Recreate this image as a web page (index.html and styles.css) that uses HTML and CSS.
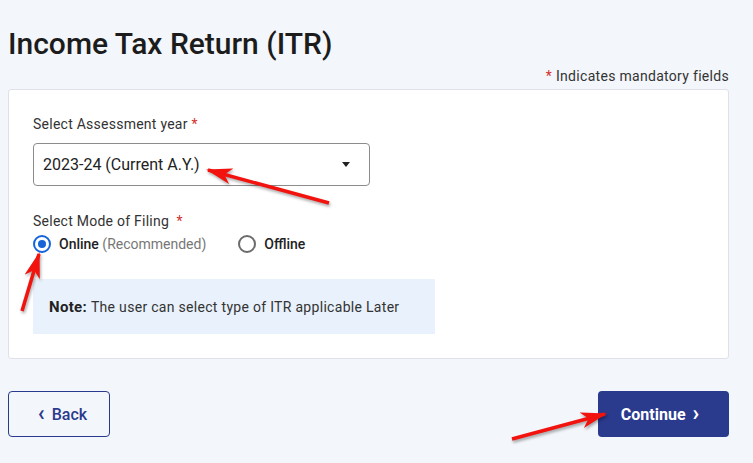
FILE: index.html
```html
<!DOCTYPE html>
<html lang="en">
<head>
  <meta charset="UTF-8">
  <meta name="viewport" content="width=device-width, initial-scale=1.0">
  <title>Income Tax Return (ITR)</title>
  <link rel="stylesheet" href="styles.css">
</head>
<body>

<main class="page">
  <h1 class="page-title">Income Tax Return (ITR)</h1>
  <p class="mandatory"><span class="req">*</span> Indicates mandatory fields</p>

  <section class="card">
    <div class="field">
      <label class="field-label">Select Assessment year <span class="req">*</span></label>
      <div class="select">
        <span class="select-value">2023-24 (Current A.Y.)</span>
        <span class="caret"></span>
      </div>
    </div>

    <div class="field mode">
      <label class="field-label">Select Mode of Filing&nbsp; <span class="req">*</span></label>
      <div class="radio-row">
        <span class="radio checked"><span class="dot"></span></span>
        <span class="radio-text">Online <span class="muted">(Recommended)</span></span>
        <span class="radio"></span>
        <span class="radio-text">Offline</span>
      </div>
    </div>

    <div class="note">
      <b>Note:</b> The user can select type of ITR applicable Later
    </div>
  </section>

  <div class="actions">
    <button class="btn btn-outline"><span class="chev">&lsaquo;</span> Back</button>
    <button class="btn btn-primary">Continue <span class="chev">&rsaquo;</span></button>
  </div>
</main>

<svg class="marks" width="753" height="463" viewBox="0 0 753 463">
  <defs>
    <marker id="head" markerUnits="userSpaceOnUse" markerWidth="26" markerHeight="16" refX="24" refY="8" orient="auto">
      <path d="M0,0 L26,8 L0,16 L7,8 z" fill="#f2120e"/>
    </marker>
  </defs>
  <line x1="329" y1="203" x2="208" y2="170" marker-end="url(#head)"/>
  <line x1="22" y1="311" x2="39" y2="254" marker-end="url(#head)"/>
  <line x1="512" y1="439" x2="605" y2="414" marker-end="url(#head)"/>
</svg>

</body>
</html>
```

FILE: styles.css
```css
:root {
  --bg-color: #f3f6fa;
  --card-bg: #ffffff;
  --text-color: #212121;
  --primary-color: #2a3a8d;
  --req-color: #d32f2f;
  --radio-color: #1565d8;
}
* { margin: 0; padding: 0; box-sizing: border-box; }
body {
  background: var(--bg-color);
  color: var(--text-color);
  font-family: Roboto, 'Liberation Sans', sans-serif;
  position: relative;
  width: 753px;
  height: 463px;
  overflow: hidden;
}
.page { padding: 26px 24px 0 8px; }

.page-title { font-size: 30px; font-weight: 500; line-height: 36px; color: #1c1c1c; }
.mandatory { text-align: right; font-size: 14px; line-height: 16px; margin-top: 6px; color: #333; letter-spacing: 0.3px; }
.req { color: var(--req-color); }

.card {
  background: var(--card-bg);
  border: 1px solid #dfe0ea;
  border-radius: 3px;
  margin-top: 5px;
  padding: 26px 24px 25px;
  height: 270px;
}
.field-label { display: block; font-size: 14px; line-height: 16px; color: #333; letter-spacing: 0.25px; }
.select {
  margin-top: 11px;
  width: 337px;
  height: 43px;
  border: 1px solid #8c8c8c;
  border-radius: 4px;
  display: flex;
  align-items: center;
  justify-content: space-between;
  padding: 0 19px 0 9px;
}
.select-value { font-size: 16px; color: #222; }
.caret {
  width: 0; height: 0;
  border-left: 4px solid transparent;
  border-right: 4px solid transparent;
  border-top: 5px solid #222;
}

.mode { margin-top: 27px; }
.radio-row { display: flex; align-items: center; margin-top: 6px; height: 18px; }
.radio {
  width: 18px; height: 18px;
  border: 2px solid #6b6b6b;
  border-radius: 50%;
  display: flex;
  align-items: center;
  justify-content: center;
  margin-right: 8px;
}
.radio.checked { border-color: var(--radio-color); }
.radio .dot { width: 8px; height: 8px; border-radius: 50%; background: var(--radio-color); }
.radio-text { font-size: 14px; font-weight: 500; color: #222; margin-right: 32px; }
.muted { color: #777; font-weight: 400; }

.note {
  margin-top: 26px;
  width: 402px;
  height: 55px;
  background: #e9f2fc;
  display: flex;
  align-items: center;
  padding-left: 16px;
  font-size: 14px;
  color: #333;
  letter-spacing: 0.3px;
}
.note b { font-size: 15px; font-weight: 700; color: #222; margin-right: 4px; }

.actions { display: flex; justify-content: space-between; margin-top: 32px; }
.btn {
  height: 46px;
  border-radius: 4px;
  font-family: Roboto, 'Liberation Sans', sans-serif;
  font-size: 16px;
  font-weight: 500;
  display: flex;
  align-items: center;
  justify-content: center;
  cursor: pointer;
}
.btn-outline { width: 102px; background: transparent; border: 1px solid var(--primary-color); color: var(--primary-color); }
.btn-primary { width: 131px; background: var(--primary-color); border: none; color: #fff; font-weight: 700; }
.chev { font-size: 22px; line-height: 16px; margin: 0 7px 3px; font-weight: 700; }

.marks {
  position: absolute;
  top: 0; left: 0;
  pointer-events: none;
  filter: drop-shadow(1px 2px 1.5px rgba(0, 0, 0, 0.35));
}
.marks line { stroke: #f2120e; stroke-width: 3.5; }
```
